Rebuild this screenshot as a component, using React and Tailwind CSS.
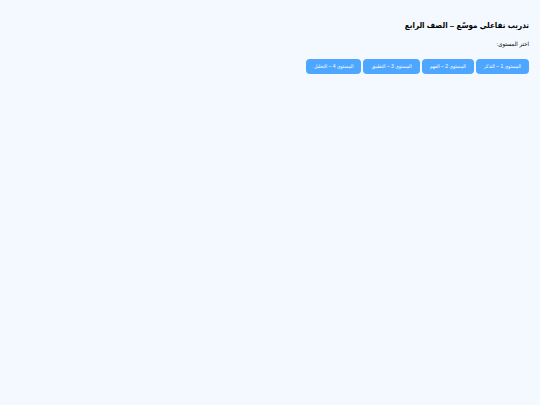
import React, { useState } from "react";

const levels = [
  "المستوى 1 – التذكر",
  "المستوى 2 – الفهم",
  "المستوى 3 – التطبيق",
  "المستوى 4 – التحليل",
];

const App = () => {
  const [level, setLevel] = useState(null);

  return (
    <main
      dir="rtl"
      className="min-h-screen bg-[#f4f9ff] px-[11px] pt-5 text-black font-['Liberation_Sans','DejaVu_Sans_Condensed',sans-serif]"
    >
      <h1 className="text-[8px] leading-3 font-bold">
        تدريب تفاعلي موسّع – الصف الرابع
      </h1>
      <p className="mt-2 text-[6px] leading-2">اختر المستوى:</p>
      <div className="mt-[11px] flex flex-wrap gap-[2px]">
        {levels.map((name, i) => (
          <button
            key={name}
            type="button"
            aria-pressed={level === i}
            onClick={() => setLevel(i)}
            className="h-[15px] rounded-[4px] bg-[#4da6ff] px-2 text-[5px] leading-none whitespace-nowrap text-white cursor-pointer"
          >
            {name}
          </button>
        ))}
      </div>
    </main>
  );
};

export default App;
